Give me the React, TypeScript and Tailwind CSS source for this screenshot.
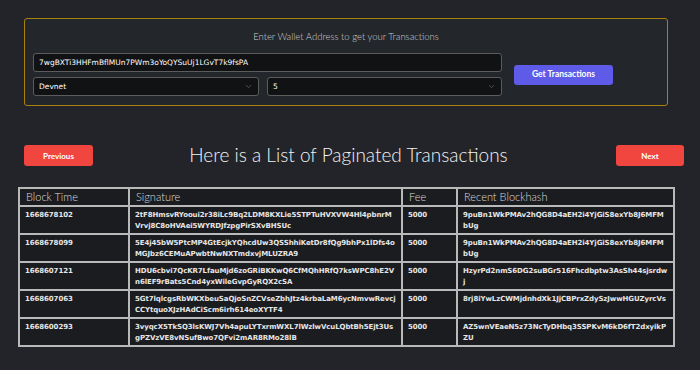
import { ChevronDown } from "lucide-react";

const rows = [
    {
        time: "1668678102",
        sig: "2tF8HmsvRYooui2r38iLc9Bq2LDM8KXLie5STPTuHVXVW4Hl4pbnrMVrvj8C8oHVAei5WYRDJfzpgPirSXvBHSUc",
        fee: "5000",
        hash: "9puBn1WkPMAv2hQG8D4aEH2i4YjGiS8exYb8J6MFMbUg",
    },
    {
        time: "1668678099",
        sig: "5E4j45bW5PtcMP4GtEcjkYQhcdUw3QSShhiKetDr8fQg9bhPx1lDfs4oMGJbz6CEMuAPwbtNwNXTmdxvjMLUZRA9",
        fee: "5000",
        hash: "9puBn1WkPMAv2hQG8D4aEH2i4YjGiS8exYb8J6MFMbUg",
    },
    {
        time: "1668607121",
        sig: "HDU6cbvi7QcKR7LfauMjd6zoGRiBKKwQ6CfMQhHRfQ7ksWPC8hE2Vn6lEF9rBats5Cnd4yxWileGvpGyRQX2cSA",
        fee: "5000",
        hash: "HzyrPd2nmS6DG2suBGr516Fhcdbptw3AsSh44sjsrdwj",
    },
    {
        time: "1668607063",
        sig: "5Gt7lqlcgsRbWKXbeuSaQjoSnZCVseZbhJtz4krbaLaM6ycNmvwRevcjCCYtquoXJzHAdCiScm6irh614eoXYTF4",
        fee: "5000",
        hash: "8rj8iYwLzCWMjdnhdXk1JjCBPrxZdySzJwwHGUZyrcVs",
    },
    {
        time: "1668600293",
        sig: "3vyqcX5TkSQ3lsKWJ7Vh4apuLYTxrmWXL7lWzlwVcuLQbtBh5Ejt3UsgPZVzVE8vNSufBwo7QFvi2mAR8RMo28lB",
        fee: "5000",
        hash: "AZ5wnVEaeN5z73NcTyDHbq3SSPKvM6kD6fT2dxyikPZU",
    },
];

const cell =
    "border-2 border-[#b9b9b9] px-[5px] pt-[3px] align-top break-all text-[7px] leading-[11px] font-bold tracking-[-0.1px] text-[#e6e6e6] [font-family:'DejaVu_Sans',sans-serif]";
const head =
    "border-2 border-[#b9b9b9] px-[6px] text-left align-middle text-[11px] font-light text-[#dcdcdc] [font-family:Lato,sans-serif]";

const App = () => {
    return (
        <div className="h-[370px] w-[700px] overflow-hidden bg-[#222429] pt-[18px]">
            <div className="ml-[24px] w-[644px] rounded-[3px] border border-[#a9820e] bg-[#23262b] px-[8px] pb-[9px] pt-[11px]">
                <p className="text-center text-[9.5px] font-light text-[#d0d0d0] [font-family:Lato,sans-serif]">
                    Enter Wallet Address to get your Transactions
                </p>
                <div className="mt-[9px] flex items-center gap-[12px]">
                    <div className="flex w-[469px] flex-col gap-[5px]">
                        <div className="flex h-[19px] items-center rounded-[3px] border border-[#5c5c5c] bg-[#111214] px-[5px] text-[7.5px] text-white [font-family:'DejaVu_Sans',sans-serif]">
                            7wgBXTi3HHFmBflMUn7PWm3oYoQYSuUj1LGvT7k9fsPA
                        </div>
                        <div className="flex gap-[8px]">
                            <div className="flex h-[19px] w-[226px] items-center justify-between rounded-[3px] border border-[#5c5c5c] bg-[#111214] px-[5px] text-[7.5px] text-white [font-family:'DejaVu_Sans',sans-serif]">
                                <span>Devnet</span>
                                <ChevronDown size={9} className="text-[#666]" />
                            </div>
                            <div className="flex h-[19px] flex-1 items-center justify-between rounded-[3px] border border-[#5c5c5c] bg-[#111214] px-[5px] text-[7.5px] text-white [font-family:'DejaVu_Sans',sans-serif]">
                                <span>5</span>
                                <ChevronDown size={9} className="text-[#666]" />
                            </div>
                        </div>
                    </div>
                    <button className="h-[20px] w-[99px] rounded-[3px] bg-[#5d5be8] text-[8.5px] font-bold text-white [font-family:Lato,sans-serif]">
                        Get Transactions
                    </button>
                </div>
            </div>

            <div className="mt-[35px] flex items-center justify-between pl-[24px] pr-[16px]">
                <button className="h-[21px] w-[69px] rounded-[3px] bg-[#f1453f] text-[8px] font-bold text-white [font-family:Lato,sans-serif]">
                    Previous
                </button>
                <h2 className="mr-[12px] text-[19px] font-light text-[#f2f2f2] [font-family:Lato,sans-serif]">
                    Here is a List of Paginated Transactions
                </h2>
                <button className="h-[21px] w-[68px] rounded-[3px] bg-[#f1453f] text-[8px] font-bold text-white [font-family:Lato,sans-serif]">
                    Next
                </button>
            </div>

            <table className="ml-[18px] mt-[17px] w-[657px] table-fixed border-collapse border border-[#8a8a8a] bg-[#1b1c20]">
                <colgroup>
                    <col className="w-[110px]" />
                    <col className="w-[273px]" />
                    <col className="w-[55px]" />
                    <col />
                </colgroup>
                <thead>
                    <tr className="h-[18px]">
                        <th className={head}>Block Time</th>
                        <th className={head}>Signature</th>
                        <th className={head}>Fee</th>
                        <th className={head}>Recent Blockhash</th>
                    </tr>
                </thead>
                <tbody>
                    {rows.map((r) => (
                        <tr key={r.time} className="h-[28px]">
                            <td className={cell}>{r.time}</td>
                            <td className={cell}>{r.sig}</td>
                            <td className={cell}>{r.fee}</td>
                            <td className={cell}>{r.hash}</td>
                        </tr>
                    ))}
                </tbody>
            </table>
        </div>
    );
};

export default App;
